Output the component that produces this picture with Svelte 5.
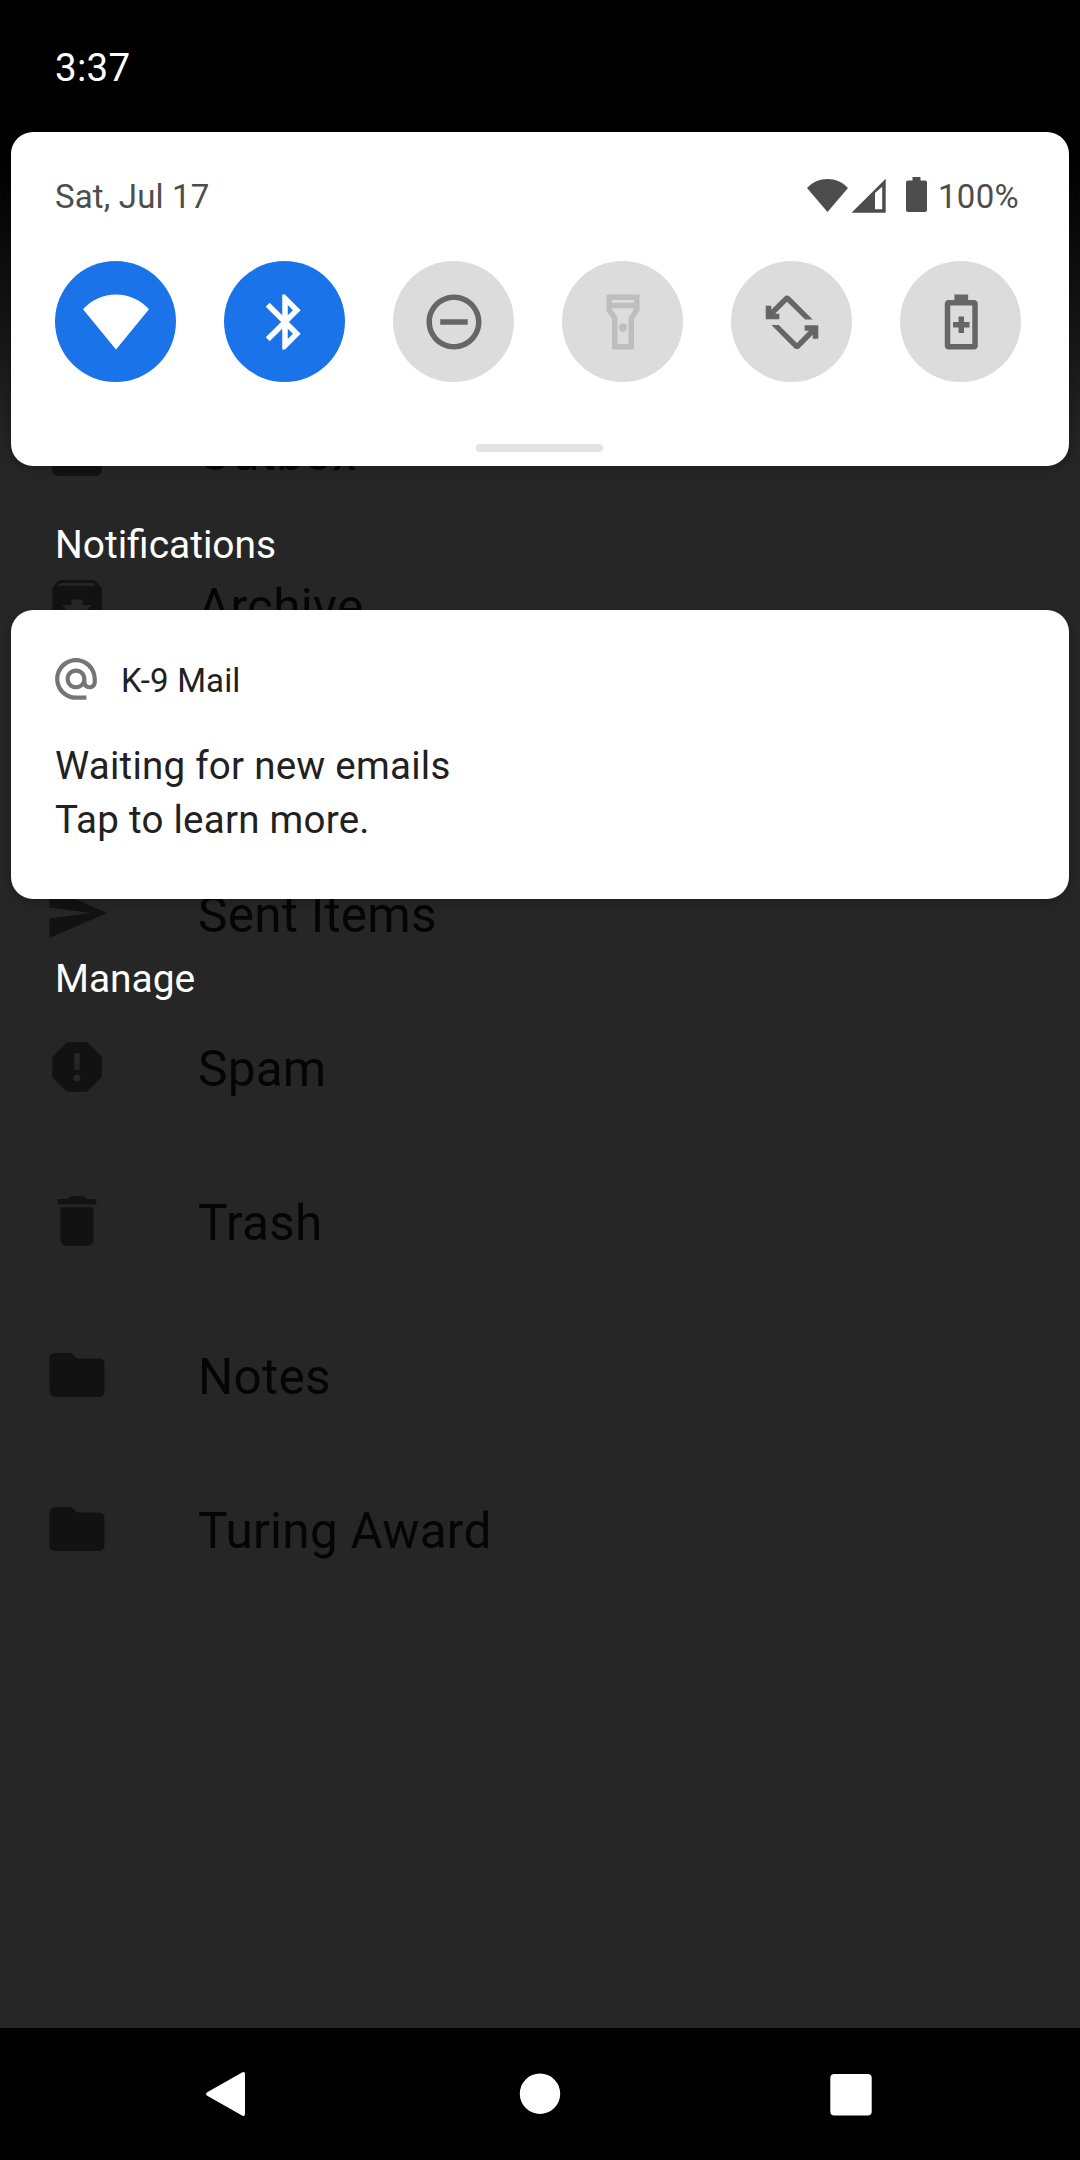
<script>
  const tiles = [
    { name: 'wifi', state: 'on' },
    { name: 'bluetooth', state: 'on' },
    { name: 'dnd', state: 'off' },
    { name: 'flashlight', state: 'disabled' },
    { name: 'rotate', state: 'off' },
    { name: 'battery', state: 'off' }
  ];

  const paths = {
    wifi: 'M12 22L0 7.4C3.1 4 7.3 2 12 2s8.900 2 12 5.400z',
    bluetooth:
      'M17.710 7.710L12 2h-1v7.590L6.410 5 5 6.410 10.590 12 5 17.590 6.410 19 11 14.410V22h1l5.710-5.710-4.300-4.290 4.300-4.290zM13 5.830l1.880 1.880L13 9.590V5.830zm1.880 10.460L13 18.170v-3.760l1.880 1.880z',
    dnd: 'M7 11v2h10v-2H7zm5-9C6.480 2 2 6.480 2 12s4.480 10 10 10 10-4.480 10-10S17.520 2 12 2zm0 18c-4.410 0-8-3.590-8-8s3.590-8 8-8 8 3.590 8 8-3.590 8-8 8z',
    flashlight:
      'M18 2H6v6l2 3v11h8V11l2-3V2zM16 4v1H8V4h8zM14 10.400V20h-4v-9.600l-2-3V7h8v.4l-2 3zM12 12.500a1.500 1.500 0 1 0 0 3 1.500 1.500 0 1 0 0-3z',
    rotate:
      'M19.500 11.100L11.100 2.700Q10.200 2 9.300 2.700L4.450 7.550V6.100H2.450V11H7.400V9H5.850L10.200 4.600L16.800 11.100zM4.500 13.100L12.900 21.500Q13.800 22.200 14.700 21.500L19.550 16.650V18.100H21.550V13.200H16.600V15.200H18.150L13.800 19.600L7.200 13.100z',
    battery:
      'M16.800 4H14.600V2h-5v2H7.400C6.700 4 6.100 4.600 6.100 5.300v15.400C6.100 21.400 6.700 22 7.400 22h9.400c.7 0 1.300-.6 1.300-1.300V5.300C18.100 4.600 17.500 4 16.800 4zM16.100 20H8.100V6h8v14zM9.100 14h2v2h2v-2h2v-2h-2v-2h-2v2H9.100z',
    archive:
      'M20.540 5.230l-1.390-1.680C18.880 3.210 18.470 3 18 3H6c-.47 0-.88.21-1.160.55L3.460 5.230C3.170 5.570 3 6.020 3 6.500V19c0 1.100.9 2 2 2h14c1.100 0 2-.9 2-2V6.500c0-.48-.17-.93-.46-1.270zM5.120 5l.81-1h12l.94 1H5.120zM12 17.500L6.500 12H10v-2h4v2h3.500L12 17.500z',
    send: 'M2.010 21L23 12 2.010 3 2 10l15 2-15 2z',
    spam: 'M15.730 3H8.270L3 8.270v7.460L8.270 21h7.460L21 15.730V8.270L15.730 3zM12 17.300c-.72 0-1.300-.58-1.300-1.300s.58-1.300 1.300-1.300 1.300.58 1.300 1.300-.58 1.300-1.300 1.300zm1-4.300h-2V7h2v6z',
    trash: 'M6 19c0 1.100.9 2 2 2h8c1.100 0 2-.9 2-2V7H6v12zM19 4h-3.500l-1-1h-5l-1 1H5v2h14V4z',
    folder: 'M10 4H4c-1.100 0-1.990.9-1.990 2L2 18c0 1.100.9 2 2 2h16c1.100 0 2-.9 2-2V8c0-1.100-.9-2-2-2h-8l-2-2z',
    at: 'M12 1.950c-5.520 0-10 4.480-10 10s4.480 10 10 10h5v-2h-5c-4.340 0-8-3.660-8-8s3.660-8 8-8 8 3.660 8 8v1.430c0 .79-.71 1.570-1.500 1.570s-1.500-.78-1.500-1.570v-1.430c0-2.760-2.240-5-5-5s-5 2.240-5 5 2.240 5 5 5c1.380 0 2.640-.56 3.540-1.470.65.89 1.770 1.470 2.960 1.470 1.970 0 3.500-1.600 3.500-3.570v-1.430c0-5.520-4.480-10-10-10zm0 13c-1.660 0-3-1.340-3-3s1.340-3 3-3 3 1.340 3 3-1.340 3-3 3z'
  };

  // The third row lies fully behind the notification card.
  const folders = [
    { icon: 'archive', label: 'Outbox' },
    { icon: 'archive', label: 'Archive' },
    { icon: null, label: '' },
    { icon: 'send', label: 'Sent Items' },
    { icon: 'spam', label: 'Spam' },
    { icon: 'trash', label: 'Trash' },
    { icon: 'folder', label: 'Notes' },
    { icon: 'folder', label: 'Turing Award' }
  ];
</script>

<div class="screen">
  <div class="drawer">
    {#each folders as folder}
      <div class="folder">
        {#if folder.icon}
          <svg viewBox="0 0 24 24"><path fill-rule="evenodd" d={paths[folder.icon]} /></svg>
          <span>{folder.label}</span>
        {/if}
      </div>
    {/each}
  </div>

  <div class="shade">
    <header class="clock">3:37</header>

    <section class="card quick">
      <div class="status">
        <span class="date">Sat, Jul 17</span>
        <svg class="indicators" viewBox="0 0 122 36">
          <path d="M20.500 35L0 11C5.500 5 12.700 2 20.500 2s15 3 20.500 9z" />
          <path fill-rule="evenodd" d="M44.500 35.700L78.700 1.800V35.700zM68 32.200H75.200V9.800L68 16z" />
          <path d="M99 5.500Q99 3.500 101 3.500H105.500V0H113.500V3.500H118Q120 3.500 120 5.500V33Q120 35 118 35H101Q99 35 99 33z" />
        </svg>
        <span class="percent">100%</span>
      </div>
      <div class="tiles">
        {#each tiles as tile}
          <button class="tile {tile.state}" aria-label={tile.name}>
            <svg viewBox="0 0 24 24"><path fill-rule="evenodd" d={paths[tile.name]} /></svg>
          </button>
        {/each}
      </div>
      <div class="handle"></div>
    </section>

    <h2>Notifications</h2>

    <section class="card notification">
      <div class="app">
        <svg viewBox="0 0 24 24"><path d={paths.at} /></svg>
        <span>K-9 Mail</span>
      </div>
      <p>Waiting for new emails</p>
      <p>Tap to learn more.</p>
    </section>

    <h2 class="manage">Manage</h2>

    <nav>
      <svg viewBox="0 0 48 48"><path d="M4.800 22.500L40 2.500Q43 1 43 4V44Q43 47 40 45.500L4.800 25.500Q3 24 4.800 22.500z" /></svg>
      <svg class="home" viewBox="0 0 48 48"><circle cx="24" cy="23.700" r="20.200" /></svg>
      <svg viewBox="0 0 48 48"><rect x="3.300" y="4" width="41.400" height="41.500" rx="4" /></svg>
    </nav>
  </div>
</div>

<style>
  :global(body) {
    background: #262626;
  }

  .screen {
    display: grid;
    width: 1080px;
    height: 2160px;
    overflow: hidden;
    background: #262626;
    font-family: Roboto, sans-serif;
  }

  .drawer,
  .shade {
    grid-area: 1 / 1;
    min-width: 0;
  }

  .drawer {
    padding-top: 374px;
    color: #050505;
  }

  .folder {
    display: flex;
    align-items: center;
    gap: 88px;
    height: 154px;
    padding-left: 44px;
    font-size: 49.5px;
    letter-spacing: 0.25px;
  }

  .folder svg {
    width: 66px;
    height: 66px;
    fill: #121212;
  }

  .folder span {
    padding-top: 3px;
  }

  .shade {
    z-index: 1;
    display: flex;
    flex-direction: column;
    height: 2160px;
    background: linear-gradient(#000 0, #000 150px, #262626 466px, transparent 466px);
  }

  .clock {
    height: 132px;
    padding-left: 55px;
    box-sizing: border-box;
    color: #fff;
    font-size: 38.5px;
    letter-spacing: 0.3px;
    line-height: 136px;
  }

  .card {
    margin: 0 11px;
    box-sizing: border-box;
    border-radius: 22px;
    background: #fff;
    box-shadow: 0 3px 8px rgba(0, 0, 0, 0.25);
  }

  .quick {
    display: flex;
    flex-direction: column;
    height: 334px;
    padding: 39px 44px 14px;
  }

  .status {
    display: flex;
    align-items: center;
    height: 50px;
    color: #4d4d4d;
    font-size: 33px;
    letter-spacing: 0.15px;
  }

  .date {
    flex: 1;
  }

  .indicators {
    width: 122px;
    height: 36px;
    margin: 0 9px 2px 0;
    fill: #4d4d4d;
  }

  .percent {
    width: 87px;
    letter-spacing: 0.3px;
  }

  .tiles {
    display: flex;
    gap: 48px;
    margin-top: 40px;
  }

  .tile {
    flex: none;
    width: 121px;
    height: 121px;
    padding: 28px 27px 27px 28px;
    border: 0;
    border-radius: 50%;
    background: #dcdcdc;
    fill: #666;
  }

  .tile svg {
    display: block;
    width: 66px;
    height: 66px;
  }

  .tile.on {
    background: #1a73e8;
    fill: #fff;
  }

  .tile.disabled {
    fill: #bebebe;
  }

  .handle {
    align-self: center;
    width: 127px;
    height: 8px;
    margin-top: auto;
    margin-right: 2px;
    border-radius: 4px;
    background: #e3e3e3;
  }

  h2 {
    height: 144px;
    margin: 0;
    padding-left: 55px;
    color: #fff;
    font-size: 38.9px;
    font-weight: 400;
    line-height: 157px;
  }

  .notification {
    height: 289px;
    padding: 44px 40px 0;
    color: #212121;
    font-size: 38.5px;
  }

  .app {
    display: flex;
    align-items: center;
    gap: 20px;
    height: 50px;
    font-size: 33px;
    letter-spacing: 0.15px;
  }

  .app svg {
    width: 50px;
    height: 50px;
    fill: #757575;
  }

  .app span {
    padding-top: 3px;
  }

  p {
    margin: 0;
    padding-left: 4px;
    letter-spacing: 0.25px;
    line-height: 54px;
  }

  .app + p {
    margin-top: 35px;
  }

  .manage {
    line-height: 160px;
  }

  nav {
    display: flex;
    align-items: center;
    gap: 263px;
    height: 132px;
    margin-top: auto;
    padding-left: 202px;
    background: #000;
  }

  nav svg {
    width: 48px;
    height: 48px;
    fill: #fff;
  }

  .home {
    margin-left: 3px;
  }
</style>
